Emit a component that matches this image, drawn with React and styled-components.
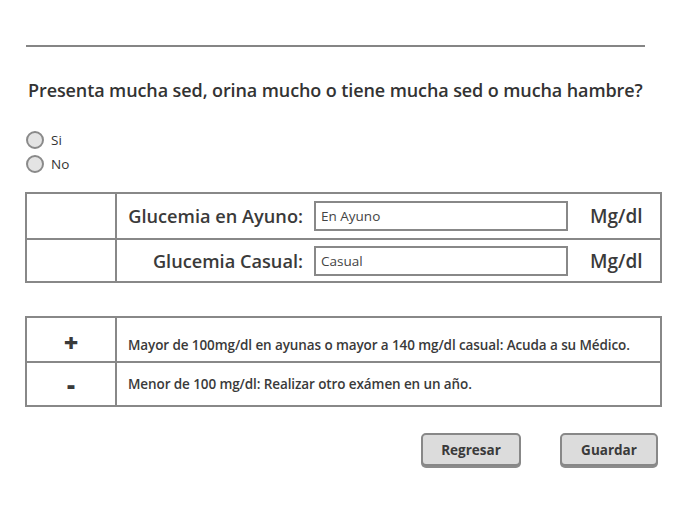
import React from "react";
import styled, { createGlobalStyle } from "styled-components";

const Global = createGlobalStyle`
  html, body { margin: 0; padding: 0; background: #fff; }
  body { font-family: "Open Sans", Lato, sans-serif; color: #363636; }
  * { box-sizing: border-box; }
`;

const Page = styled.div`
  width: 682px;
  height: 510px;
  padding: 45px 0 0 25px;
`;

const Rule = styled.div`
  width: 619px;
  height: 2px;
  margin-left: 1px;
  background: #858585;
`;

const Question = styled.h1`
  margin: 32px 0 0 3px;
  font-size: 18px;
  font-weight: 600;
  line-height: 22px;
  letter-spacing: -0.1px;
  color: #333;
`;

const RadioList = styled.div`
  margin: 30px 0 0 1px;
  display: flex;
  flex-direction: column;
  gap: 6px;
`;

const RadioRow = styled.label`
  display: flex;
  align-items: center;
  gap: 7px;
  font-size: 13.5px;
  color: #333;
  height: 18px;
`;

const Circle = styled.span`
  width: 18px;
  height: 18px;
  border-radius: 50%;
  border: 2px solid #8a8a8a;
  background: #e4e4e4;
`;

const Table = styled.div`
  margin-top: ${(p) => p.$top}px;
  width: 637px;
  border: 2px solid #888;
  display: grid;
  grid-template-columns: 88px 1fr;
`;

const Cell = styled.div`
  height: ${(p) => p.$h}px;
  border-left: ${(p) => (p.$first ? "none" : "2px solid #888")};
  border-top: ${(p) => (p.$topRow ? "none" : "2px solid #888")};
  display: flex;
  align-items: center;
  justify-content: ${(p) => (p.$center ? "center" : "flex-start")};
`;

const FieldRow = styled.div`
  display: grid;
  grid-template-columns: 1fr 254px 92px;
  align-items: center;
  width: 100%;
`;

const FieldLabel = styled.div`
  text-align: right;
  padding-right: 11px;
  font-size: 18.2px;
  font-weight: 600;
  color: #3a3a3a;
`;

const Input = styled.div`
  height: 30px;
  border: 2px solid #888;
  padding: 0 5px;
  display: flex;
  align-items: center;
  font-size: 13.5px;
  color: #444;
`;

const Unit = styled.div`
  padding-left: 22px;
  font-size: 19px;
  font-weight: 600;
  color: #3a3a3a;
`;

const Sign = styled.div`
  font-size: 25px;
  font-weight: 800;
  color: #3a3a3a;
  line-height: 1;
  padding-top: ${(p) => p.$pt || 0}px;
`;

const Note = styled.div`
  padding: ${(p) => p.$pt || 0}px 0 0 11px;
  font-size: 13.5px;
  font-weight: 600;
  letter-spacing: -0.1px;
  color: #3a3a3a;
`;

const Actions = styled.div`
  margin-top: 26px;
  width: 633px;
  display: flex;
  justify-content: flex-end;
  gap: 39px;
`;

const Button = styled.button`
  width: ${(p) => p.$w}px;
  height: 33px;
  border: 2px solid #888;
  border-radius: 5px;
  background: #dcdcdc;
  box-shadow: 0 2px 0 #8c8c8c;
  font-family: "Open Sans", Lato, sans-serif;
  font-size: 13.5px;
  font-weight: 700;
  color: #3a3a3a;
`;

export default function App() {
  return (
    <Page>
      <Global />
      <Rule />
      <Question>Presenta mucha sed, orina mucho o tiene mucha sed o mucha hambre?</Question>
      <RadioList>
        <RadioRow><Circle />Si</RadioRow>
        <RadioRow><Circle />No</RadioRow>
      </RadioList>

      <Table $top={19}>
        <Cell $first $topRow $h={44} />
        <Cell $topRow $h={44}>
          <FieldRow>
            <FieldLabel>Glucemia en Ayuno:</FieldLabel>
            <Input>En Ayuno</Input>
            <Unit>Mg/dl</Unit>
          </FieldRow>
        </Cell>
        <Cell $first $h={43} />
        <Cell $h={43}>
          <FieldRow>
            <FieldLabel>Glucemia Casual:</FieldLabel>
            <Input>Casual</Input>
            <Unit>Mg/dl</Unit>
          </FieldRow>
        </Cell>
      </Table>

      <Table $top={33}>
        <Cell $first $topRow $center $h={43}><Sign $pt={5}>+</Sign></Cell>
        <Cell $topRow $h={43}><Note $pt={10}>Mayor de 100mg/dl en ayunas o mayor a 140 mg/dl casual: Acuda a su Médico.</Note></Cell>
        <Cell $first $center $h={44}><Sign>-</Sign></Cell>
        <Cell $h={44}><Note $pt={0}>Menor de 100 mg/dl: Realizar otro exámen en un año.</Note></Cell>
      </Table>

      <Actions>
        <Button $w={100}>Regresar</Button>
        <Button $w={98}>Guardar</Button>
      </Actions>
    </Page>
  );
}
